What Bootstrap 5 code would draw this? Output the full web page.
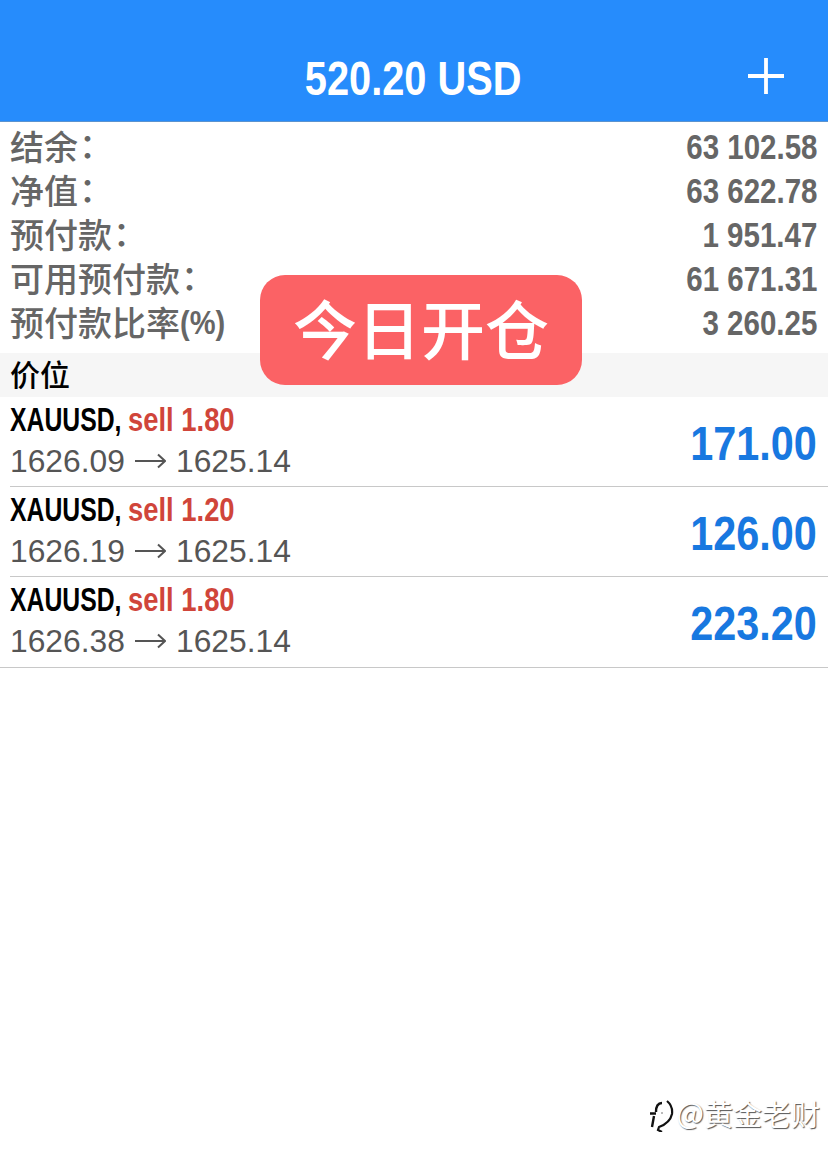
<!DOCTYPE html>
<html lang="zh-CN">
<head>
<meta charset="utf-8">
<meta name="viewport" content="width=device-width, initial-scale=1">
<title>520.20 USD</title>
<link href="https://cdn.jsdelivr.net/npm/bootstrap@5.3.0/dist/css/bootstrap.min.css" rel="stylesheet">
<style>
body{font-family:"Liberation Sans","Noto Sans CJK SC",sans-serif;background:#fff;color:#000;height:1165px;overflow:hidden}
.topbar{height:122px;background:#268cfc;border-bottom:1px solid #5b93cf;padding:34px 2px 0 0}
.cond{display:inline-block;white-space:pre;font-weight:700;transform-origin:left center}
.topbar .cond{font-size:48.5px;line-height:88px;color:#fff;transform:scaleX(.82);transform-origin:center}
.plus{right:43px;top:57px}
.summary{height:231px;padding:3px 10px 0;color:#666}
.summary li{height:44px;line-height:44px;font-size:34px}
.lbl{font-family:"Noto Sans CJK SC",sans-serif;font-weight:500;line-height:42px;height:42px}
.colon{display:inline-block;transform:translate(1px,-2px);line-height:42px}
.summary .cond{font-size:34.5px;transform:scaleX(.855);transform-origin:right center;margin-right:1px}
.summary .unit{font-size:33px;transform:scaleX(.88);transform-origin:left center}
.section-bar{height:44px;background:#f6f6f6;padding-left:10px;font:500 30px/41px "Noto Sans CJK SC",sans-serif}
.deal{height:90px;margin-left:10px;padding-right:11px;border-bottom:1px solid #c8c8c8}
.deal:last-child{margin-left:0;padding-left:10px;height:91px}
.sym,.side{font-size:33px;line-height:46px}
.symbox{width:118px}
.sym{transform:scaleX(.75)}
.side{color:#d0453a;transform:scaleX(.83)}
.quote{font-size:31.8px;line-height:36px;color:#555;gap:10px}
.profit{font-size:49px;line-height:92px;color:#1878e0;transform:scaleX(.845);transform-origin:right center}
.tag-open{left:260px;top:275px;width:322px;height:110px;border-radius:25px;background:#fb6265;color:#fff;font:500 64px/103px "Noto Sans CJK SC",sans-serif}
.wm{right:8px;bottom:33px;color:#fff;font:400 29px/36px "Noto Sans CJK SC",sans-serif;text-shadow:1px 1px 1px #555}
.wm svg{margin-top:7px}
.at{display:inline-block;transform:translateY(-2px)}
</style>
</head>
<body class="position-relative">
<header class="topbar text-center position-relative">
  <span class="cond">520.20 USD</span>
  <svg class="plus position-absolute" width="38" height="38" viewBox="0 0 38 38"><path d="M1 19H37M19 1V37" stroke="#fff" stroke-width="3.8"/></svg>
</header>
<ul class="summary list-unstyled mb-0">
  <li class="d-flex justify-content-between"><span class="lbl">结余<span class="colon">：</span></span><span class="cond">63 102.58</span></li>
  <li class="d-flex justify-content-between"><span class="lbl">净值<span class="colon">：</span></span><span class="cond">63 622.78</span></li>
  <li class="d-flex justify-content-between"><span class="lbl">预付款<span class="colon">：</span></span><span class="cond">1 951.47</span></li>
  <li class="d-flex justify-content-between"><span class="lbl">可用预付款<span class="colon">：</span></span><span class="cond">61 671.31</span></li>
  <li class="d-flex justify-content-between"><span class="d-flex"><span class="lbl">预付款比率</span><span class="cond unit">(%)</span></span><span class="cond">3 260.25</span></li>
</ul>
<div class="section-bar">价位</div>
<main>
  <div class="deal d-flex justify-content-between">
    <div><div class="d-flex"><div class="symbox"><span class="cond sym">XAUUSD,</span></div><span class="cond side">sell 1.80</span></div>
    <div class="quote d-flex align-items-center"><span>1626.09</span><svg width="31" height="18" viewBox="0 0 31 18"><path d="M0 9H30M23 2.5L30 9L23 15.5" fill="none" stroke="#555" stroke-width="2"/></svg><span>1625.14</span></div></div>
    <span class="cond profit">171.00</span>
  </div>
  <div class="deal d-flex justify-content-between">
    <div><div class="d-flex"><div class="symbox"><span class="cond sym">XAUUSD,</span></div><span class="cond side">sell 1.20</span></div>
    <div class="quote d-flex align-items-center"><span>1626.19</span><svg width="31" height="18" viewBox="0 0 31 18"><path d="M0 9H30M23 2.5L30 9L23 15.5" fill="none" stroke="#555" stroke-width="2"/></svg><span>1625.14</span></div></div>
    <span class="cond profit">126.00</span>
  </div>
  <div class="deal d-flex justify-content-between">
    <div><div class="d-flex"><div class="symbox"><span class="cond sym">XAUUSD,</span></div><span class="cond side">sell 1.80</span></div>
    <div class="quote d-flex align-items-center"><span>1626.38</span><svg width="31" height="18" viewBox="0 0 31 18"><path d="M0 9H30M23 2.5L30 9L23 15.5" fill="none" stroke="#555" stroke-width="2"/></svg><span>1625.14</span></div></div>
    <span class="cond profit">223.20</span>
  </div>
</main>
<div class="tag-open position-absolute text-center">今日开仓</div>
<div class="wm position-absolute d-flex align-items-center">
  <svg width="28" height="32" viewBox="0 0 28 32" fill="none" stroke="#111"><path d="M13 3Q7 3 7 12M1 13.5H7M5 16L3 27" stroke-width="2.4"/><path d="M18 1Q24 6 23 14Q21 23 10 27L9 30L13 32" stroke-width="2.2"/><path d="M12 13H14" stroke="#777" stroke-width="1"/></svg>
  <span><span class="at">@</span>黄金老财</span>
</div>
<script src="https://cdn.jsdelivr.net/npm/bootstrap@5.3.0/dist/js/bootstrap.bundle.min.js"></script>
</body>
</html>
